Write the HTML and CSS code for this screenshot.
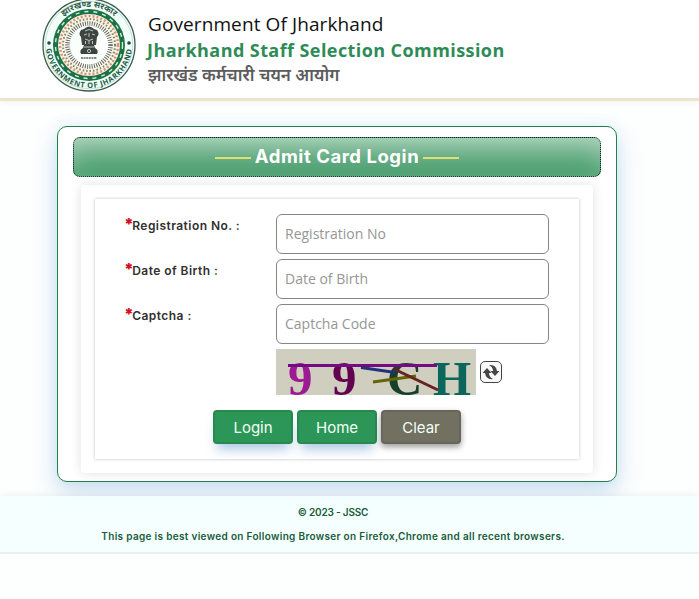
FILE: index.html
```
<!DOCTYPE html>
<html lang="en">
<head>
  <meta charset="UTF-8">
  <meta name="viewport" content="width=device-width, initial-scale=1.0">
  <title>JSSC - Admit Card Login</title>
  <link rel="stylesheet" href="styles.css">
</head>
<body>
  <header class="header">
    <svg class="emblem" viewBox="0 0 94 94" role="img" aria-label="Government of Jharkhand">
      <defs>
        <path id="arcTop" d="M9 47a38 38 0 0 1 76 0"/>
        <path id="arcBottom" d="M4 47a43 43 0 0 0 86 0"/>
      </defs>
      <circle cx="47" cy="47" r="46" fill="#f2fff9" stroke="#3d5c50" stroke-width="1.3"/>
      <circle cx="47" cy="47" r="43.8" fill="none" stroke="#a9c9b9" stroke-width=".6"/>
      <circle cx="47" cy="47" r="36" fill="#1b7245"/>
      <circle cx="47" cy="47" r="33.5" fill="none" stroke="#d9eadc" stroke-width="1.4" stroke-dasharray="4 5"/>
      <circle cx="47" cy="47" r="31" fill="#fbf1e4"/>
      <circle cx="47" cy="47" r="29" fill="none" stroke="#d1967b" stroke-width="2.5" stroke-dasharray="2 2"/>
      <circle cx="47" cy="47" r="26" fill="none" stroke="#6f8d68" stroke-width="2" stroke-dasharray="1.5 2"/>
      <circle cx="47" cy="47" r="21.5" fill="#fbfffb" stroke="#59625c" stroke-width="4.5" stroke-dasharray=".9 1.4"/>
      <g fill="#3c4541">
        <path d="M42 31q5-5 10 0l3 1q3 4 0 7l-1 8H40l-1-8q-3-3 0-7z"/>
        <path d="M42 47h10l1 3q4 2 2 6H39q-2-4 2-6z"/>
      </g>
      <g fill="none" stroke="#dce3dc" stroke-width=".8">
        <path d="M43 33q4-3 8 0M42 37l3-1m5 0 3 1M47 35v4m-4 2q4 3 8 0M43.5 43v3m3.500-3v3m3.500-3v3M42 49h10"/>
        <circle cx="47" cy="53" r="1.6"/>
      </g>
      <path d="M39 60h16" stroke="#59645c" stroke-width="1.5" stroke-dasharray="2 .6"/>
      <circle cx="7" cy="45" r="1.8" fill="#174c38"/>
      <circle cx="87" cy="45" r="1.8" fill="#174c38"/>
      <text class="emblem-hindi"><textPath href="#arcTop" startOffset="50%" text-anchor="middle">झारखण्ड सरकार</textPath></text>
      <text class="emblem-english"><textPath href="#arcBottom" startOffset="50%" text-anchor="middle">GOVERNMENT OF JHARKHAND</textPath></text>
    </svg>
    <div class="header-text">
      <p class="govt">Government Of Jharkhand</p>
      <h1>Jharkhand Staff Selection Commission</h1>
      <p class="hindi" lang="hi">झारखंड कर्मचारी चयन आयोग</p>
    </div>
  </header>

  <main class="card">
    <h2 class="card-title"><span>Admit Card Login</span></h2>
    <div class="panel">
      <form class="login-form">
        <div class="form-row">
          <label for="regNo"><b>*</b>Registration No. :</label>
          <input type="text" id="regNo" placeholder="Registration No">
        </div>
        <div class="form-row">
          <label for="dob"><b>*</b>Date of Birth :</label>
          <input type="text" id="dob" placeholder="Date of Birth">
        </div>
        <div class="form-row">
          <label for="captcha"><b>*</b>Captcha :</label>
          <input type="text" id="captcha" placeholder="Captcha Code">
        </div>
        <div class="captcha">
          <svg class="captcha-image" viewBox="0 0 200 46">
            <rect width="200" height="46" fill="#d0cebf"/>
            <g class="captcha-text">
              <text x="12" y="45.5" fill="#9c1b92">9</text>
              <text x="56" y="45.5" fill="#640052">9</text>
              <text x="111" y="45.5" fill="#16402b">C</text>
              <text x="157" y="45.5" fill="#0b665c">H</text>
            </g>
            <g fill="none" stroke-width="3">
              <path d="M12 16.5h149" stroke="#750b82"/>
              <path d="M85 18.5l34 5" stroke="#24317c"/>
              <path d="M97 33l43-6" stroke="#656505"/>
              <path d="M118 20l44 21" stroke="#652323"/>
            </g>
          </svg>
          <button type="button" class="refresh" aria-label="Refresh captcha">
            <svg viewBox="0 0 20 20">
              <path d="M8 3q7-1 8 6h2.500L14 14 9.500 9H12q0-4-4-6z"/>
              <path d="M12 17q-7 1-8-6H1.500L6 6l4.500 5H8q0 4 4 6z"/>
            </svg>
          </button>
        </div>
        <div class="buttons">
          <button type="button" class="btn btn-green">Login</button>
          <button type="button" class="btn btn-green">Home</button>
          <button type="reset" class="btn btn-grey">Clear</button>
        </div>
      </form>
    </div>
  </main>

  <footer class="footer">
    <p class="copyright">© 2023 - JSSC</p>
    <p class="browsers">This page is best viewed on Following Browser on Firefox,Chrome and all recent browsers.</p>
  </footer>
</body>
</html>
```
FILE: styles.css
```
* {
  margin: 0;
  padding: 0;
  box-sizing: border-box;
}

body {
  font-family: Inter, "Open Sans", sans-serif;
  background: #fdfefe;
  overflow: hidden;
}

.header {
  display: flex;
  height: 101px;
  padding-left: 42px;
  background: #fefffe;
  border-bottom: 3px solid #f0e3cc;
  box-shadow: 0 2px 6px rgba(0, 0, 0, 0.04);
}

.emblem {
  width: 94px;
  height: 94px;
  margin-top: -2px;
}

.emblem-hindi {
  font: bold 8.5px "Noto Sans Devanagari", "Noto Sans", sans-serif;
  fill: #31594a;
}

.emblem-english {
  font: bold 7.5px "Open Sans", sans-serif;
  letter-spacing: 0.6px;
  fill: #245b47;
}

.header-text {
  padding: 11px 0 0 12px;
  font-family: "Open Sans", sans-serif;
  white-space: nowrap;
}

.govt {
  font-size: 19px;
  line-height: 26px;
  color: #111;
  letter-spacing: 0.1px;
}

.header-text h1 {
  margin-left: -1px;
  font-size: 18px;
  font-weight: 700;
  line-height: 26px;
  letter-spacing: 0.42px;
  color: #2e8b57;
}

.hindi {
  font-family: "Noto Sans Devanagari", "Noto Sans", sans-serif;
  font-size: 17px;
  font-weight: 600;
  line-height: 28px;
  color: #5c5c5c;
}

.card {
  width: 560px;
  height: 356px;
  margin: 25px 0 0 57px;
  padding: 10px 15px;
  background: #fff;
  border: 1px solid #238048;
  border-radius: 10px;
  box-shadow: 0 12px 24px rgba(70, 145, 205, 0.25), 0 0 14px rgba(120, 200, 250, 0.18);
}

.card-title {
  display: flex;
  align-items: center;
  justify-content: center;
  gap: 4px;
  height: 40px;
  padding-bottom: 3px;
  color: #fff;
  font-size: 18.5px;
  font-weight: 700;
  letter-spacing: 0.55px;
  background: linear-gradient(rgba(255, 255, 255, 0.45), transparent 90%), #409966;
  border: 1px dotted #062417;
  border-radius: 7px;
  box-shadow: inset 0 0 24px rgba(255, 255, 255, 0.25);
}

.card-title::before,
.card-title::after {
  content: "";
  width: 36px;
  height: 2px;
  margin-top: 4px;
  background: #e0df70;
}

.panel {
  height: 288px;
  margin: 8px 8px 0;
  padding: 14px;
  background: #fefffe;
  border-radius: 4px;
  box-shadow: 0 0 12px rgba(0, 0, 0, 0.12);
}

.login-form {
  height: 260px;
  padding: 15px 30px 0;
  background: #fff;
  box-shadow: 0 0 3px rgba(0, 0, 0, 0.25);
}

.form-row {
  display: flex;
  height: 45px;
}

.form-row label {
  width: 151px;
  flex-shrink: 0;
  padding-top: 4px;
  font-size: 12px;
  font-weight: 600;
  line-height: 16px;
  letter-spacing: 0.45px;
  color: #303030;
  white-space: nowrap;
}

.form-row label b {
  margin-left: -1px;
  font-size: 16px;
  line-height: 12px;
  letter-spacing: -1.5px;
  color: #d40d20;
}

.form-row input {
  width: 273px;
  flex-shrink: 0;
  height: 40px;
  padding: 0 8px 2px;
  font: 14px "Open Sans", sans-serif;
  background: #fff;
  border: 1px solid #858585;
  border-radius: 6px;
}

.form-row input::placeholder {
  color: #969696;
}

.captcha {
  display: flex;
  align-items: center;
  gap: 4px;
  margin-left: 151px;
}

.captcha-image {
  width: 200px;
  height: 46px;
  overflow: visible;
}

.captcha-text {
  font: bold 49px "Liberation Serif", serif;
}

.refresh {
  width: 22px;
  height: 22px;
  background: #f8f8f8;
  border: 1px solid #444;
  border-radius: 5px;
}

.refresh svg {
  display: block;
  width: 20px;
  height: 20px;
  fill: #454545;
}

.buttons {
  display: flex;
  gap: 4px;
  margin: 15px 0 0 88px;
}

.btn {
  width: 80px;
  height: 34px;
  color: #f4fff7;
  font: 15px Inter, sans-serif;
  border-radius: 4px;
}

.btn-green {
  background: #2b9658;
  border: 2px solid #28894f;
  box-shadow: 0 9px 12px -4px rgba(62, 126, 190, 0.45);
}

.btn-grey {
  background: #727060;
  border: 2px solid #67665a;
  box-shadow: 0 3px 6px rgba(0, 0, 0, 0.4);
}

.footer {
  position: relative;
  height: 58px;
  margin-top: 14px;
  padding-top: 8px;
  color: #185b39;
  font-size: 10px;
  font-weight: 600;
  line-height: 16px;
  text-align: center;
  background: rgba(243, 255, 255, 0.84);
  border-bottom: 2px solid #e8f1f0;
  box-shadow: 0 0 8px rgba(0, 50, 40, 0.08);
}

.footer p {
  width: 666px;
}

.copyright {
  letter-spacing: -0.2px;
}

.browsers {
  margin-top: 8px;
  letter-spacing: 0.32px;
}
```
